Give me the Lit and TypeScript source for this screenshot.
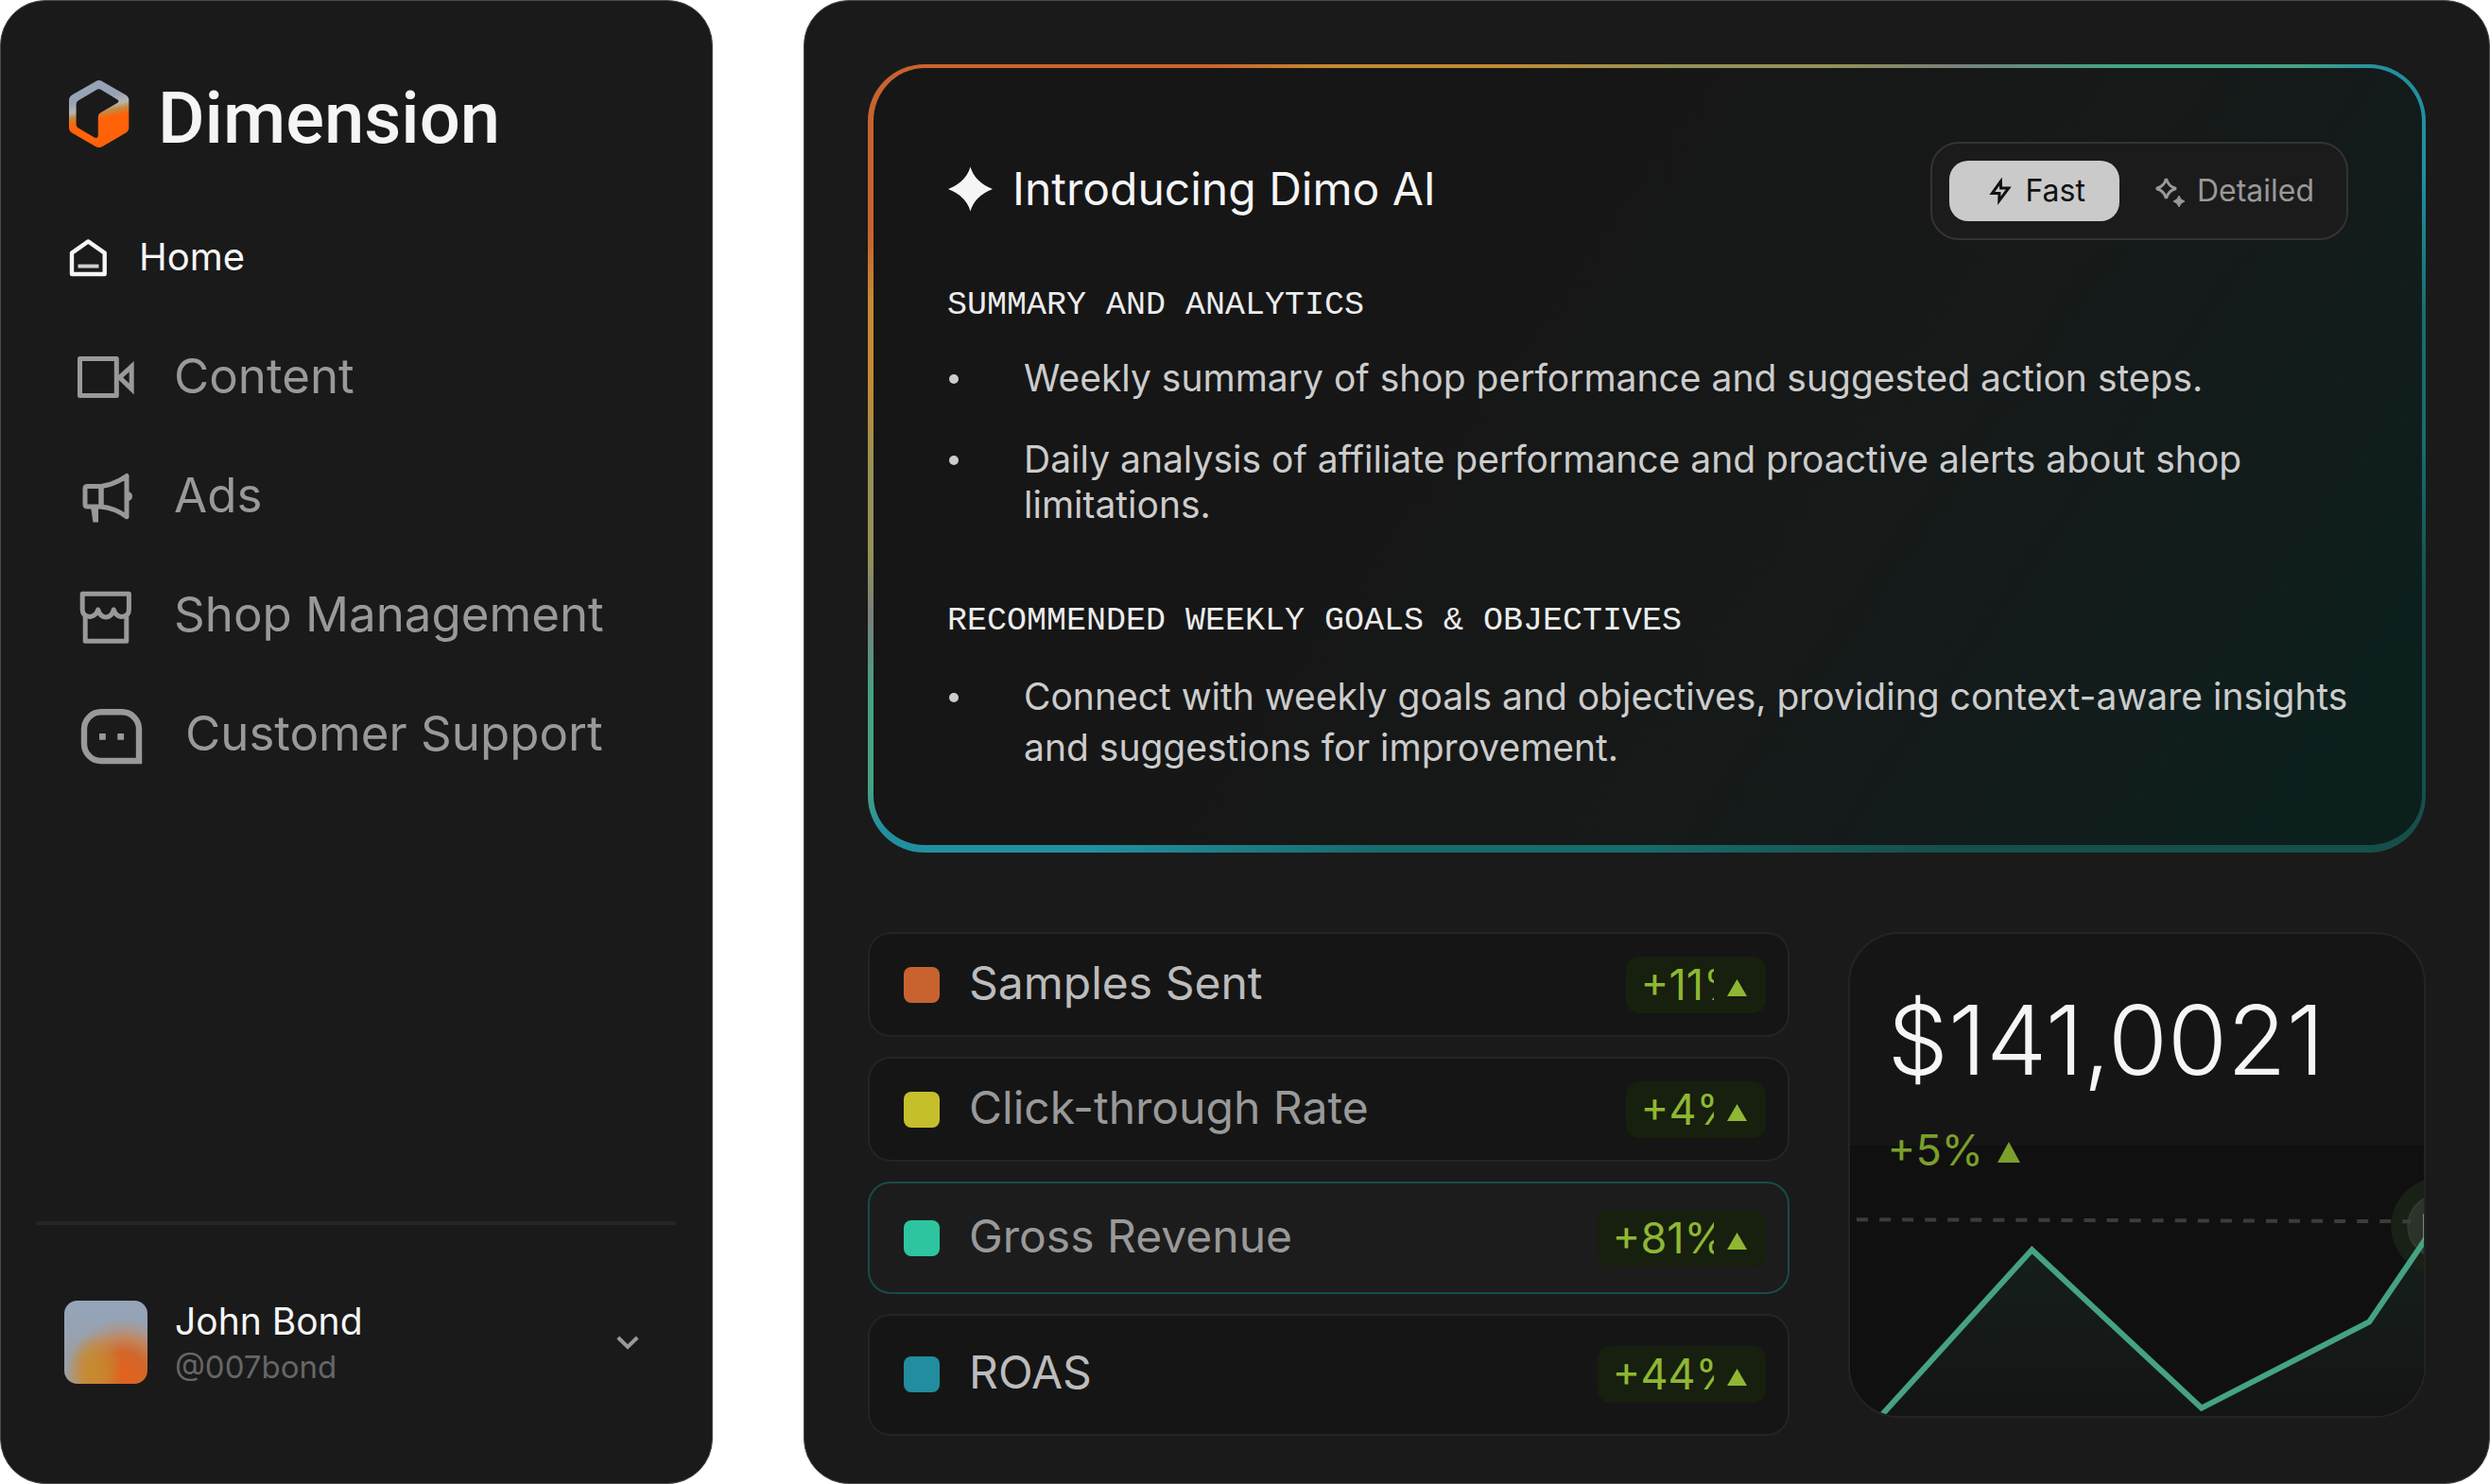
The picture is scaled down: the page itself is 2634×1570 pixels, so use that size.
import { LitElement, html, svg, css } from "lit";
import { customElement, property, state } from "lit/decorators.js";
import { classMap } from "lit/directives/class-map.js";

interface NavEntry {
  label: string;
  icon: string;
}

interface Stat {
  label: string;
  value: string;
  tone: string;
  size: string;
  bright: boolean;
  wide: boolean;
  selected?: boolean;
}

const NAV: NavEntry[] = [
  { label: "Home", icon: "home" },
  { label: "Content", icon: "camera" },
  { label: "Ads", icon: "ads" },
  { label: "Shop Management", icon: "shop" },
  { label: "Customer Support", icon: "support" },
];

const STATS: Stat[] = [
  { label: "Samples Sent", value: "+11%", tone: "orange", size: "small", bright: true, wide: false },
  { label: "Click-through Rate", value: "+4%", tone: "yellow", size: "small", bright: false, wide: false },
  { label: "Gross Revenue", value: "+81%", tone: "green", size: "medium", bright: false, wide: true, selected: true },
  { label: "ROAS", value: "+44%", tone: "blue", size: "large", bright: true, wide: true },
];

const ICONS: Record<string, unknown> = {
  home: html`<svg width="42" height="48" viewBox="0 0 42 48" fill="none" stroke="currentColor" stroke-width="4.4" aria-hidden="true">
    <path d="M20.3 7.4 37.7 19.6V42H3V19.6Z" stroke-linejoin="round" />
    <path d="M9.5 33.6H31.5" stroke="#cfcfcf" stroke-width="4" />
  </svg>`,
  camera: html`<svg width="72" height="62" viewBox="0 1 72 62" fill="none" stroke="currentColor" stroke-width="5" aria-hidden="true">
    <rect x="4.5" y="13.5" width="38.8" height="39" stroke-linejoin="round" />
    <path d="M46.5 33.3 59.2 21.6V45.6Z" />
  </svg>`,
  ads: html`<svg width="72" height="62" viewBox="0 1 72 62" fill="none" stroke="currentColor" stroke-width="5" aria-hidden="true">
    <path d="M27 22.5H12.5Q10 22.5 10 25V41.5Q10 44 12.5 44H27Z" />
    <path d="M27 22.5Q42 20.5 54 11.5V54.8Q42 45.5 27 44Z" stroke-linejoin="round" />
    <path d="M56 28.2A5 5 0 0 1 56 38Z" fill="currentColor" stroke="none" />
    <path d="M16.2 45H24V60.4H18.4Z" fill="currentColor" stroke="none" />
  </svg>`,
  shop: html`<svg width="72" height="62" viewBox="0 1 72 62" fill="none" stroke="currentColor" stroke-width="5" stroke-linejoin="round" aria-hidden="true">
    <path d="M7.2 10.2H56.4V27Q56.4 34 48.6 34.4Q42.4 34 40.3 27Q38 34.8 32 35Q26 34.8 23.7 27Q21.4 34 15.2 34.4Q7.2 34 7.2 27Z" />
    <path d="M10.2 32.5V60.2H53.8V32.5" />
  </svg>`,
  support: html`<svg class="tall" width="72" height="62" viewBox="0 1 72 62" fill="none" stroke="currentColor" stroke-width="6.4" aria-hidden="true">
    <path d="M67 61H27A18 18 0 0 1 9 43V27.5A18 18 0 0 1 27 9.3H49A18 18 0 0 1 67 27.5Z" />
    <path d="M25 32H31.8V38.8H25ZM44.3 32H51.1V38.8H44.3Z" fill="currentColor" stroke="none" />
  </svg>`,
};

@customElement("side-bar")
class SideBar extends LitElement {
  @state() private current = "Home";

  static styles = css`
    :host {
      display: flex;
      flex-direction: column;
      box-sizing: border-box;
      border: 1px solid #4a4a4a;
      border-radius: 48px;
      background: #1a1a1a;
      font-family: Inter, "Liberation Sans", sans-serif;
      color: #f5f5f5;
    }
    svg {
      display: block;
      flex: none;
      overflow: visible;
    }
    .brand {
      display: flex;
      align-items: flex-start;
      gap: 30px;
      padding: 84px 72px 0;
      color: #f5f5f5;
      text-decoration: none;
    }
    .wordmark {
      font: 500 76px/80px Roboto, "Liberation Sans", sans-serif;
    }
    .nav {
      display: flex;
      flex-direction: column;
      gap: 64px;
      padding: 83px 0 0 79px;
    }
    .link {
      display: flex;
      align-items: center;
      gap: 32px;
      font-size: 51px;
      line-height: 62px;
      font-weight: 400;
      color: #999999;
      text-decoration: none;
      white-space: nowrap;
    }
    .link.home {
      margin: 0 0 7px -7px;
      font-size: 40px;
      line-height: 48px;
      color: #f5f5f5;
    }
    .link.support {
      gap: 44px;
    }
    .footer {
      margin: auto 38px 0 37px;
      border-top: 4px solid #232623;
      padding: 78px 0 103px;
    }
    .profile {
      display: flex;
      align-items: center;
      gap: 29px;
      width: 100%;
      border: 0;
      padding: 0 39px 0 30px;
      background: none;
      font: inherit;
      color: inherit;
      text-align: left;
    }
    .avatar {
      flex: none;
      width: 88px;
      height: 88px;
      border-radius: 14px;
      background:
        radial-gradient(ellipse 34% 46% at 36% 84%, #c68b2d 0%, #c68b2dbb 45%, #c68b2d00 100%),
        radial-gradient(ellipse 68% 66% at 72% 88%, #e5611b 0%, #d1672b 40%, #c08760 66%, #ae9484bb 82%, #9c9c9f00 100%),
        linear-gradient(#95a4b8 15%, #9c9c9f);
    }
    .who {
      display: flex;
      flex: 1;
      flex-direction: column;
      gap: 4px;
    }
    .name {
      font-size: 39px;
      line-height: 48px;
    }
    .handle {
      font-size: 33px;
      line-height: 40px;
      color: #666666;
    }
  `;

  render() {
    return html`
      <a class="brand" href="#">
        <svg width="64" height="72" viewBox="0 0 64 72" aria-hidden="true">
          <defs>
            <linearGradient id="cube" gradientUnits="userSpaceOnUse" x1="0" y1="0" x2="14.9" y2="69.6">
              <stop offset="0.34" stop-color="#95a3b5" />
              <stop offset="0.48" stop-color="#b9b6b2" />
              <stop offset="0.56" stop-color="#bf8d45" />
              <stop offset="0.66" stop-color="#ff6209" />
            </linearGradient>
          </defs>
          <path
            fill="url(#cube)"
            fill-rule="evenodd"
            d="M28 1.2Q31.7-1 35.4 1.2L59.8 15.2Q63.3 17.3 63.3 21V50Q63.3 53.8 59.8 55.8L35.4 70Q31.7 72 28 70L3.5 55.8Q0 53.8 0 50V21Q0 17.3 3.5 15.2ZM30 9.6 10 21.2Q7.6 22.6 7.6 25.4V46.6Q7.6 49.2 10 50.6L27 60.6Q30.5 62 30.8 58V38.6Q30.8 35.6 33.3 34.2L51.4 23.7Q53.6 22 51.4 20.6L33.2 9.6Q31.6 8.8 30 9.6Z"
          />
        </svg>
        <span class="wordmark">Dimension</span>
      </a>
      <nav class="nav" aria-label="Main">
        ${NAV.map(
          (entry) => html`<a
            class="link ${entry.icon}"
            href="#"
            aria-current=${this.current === entry.label ? "page" : "false"}
            @click=${() => (this.current = entry.label)}
            >${ICONS[entry.icon]}<span>${entry.label}</span></a
          >`
        )}
      </nav>
      <div class="footer">
        <button class="profile" type="button" aria-label="John Bond, account menu">
          <span class="avatar"></span>
          <span class="who">
            <span class="name">John Bond</span>
            <span class="handle">@007bond</span>
          </span>
          <svg width="24" height="16" viewBox="0 0 24 16" fill="none" stroke="#999999" stroke-width="4" aria-hidden="true">
            <path d="M1.8 3 12 13 22.2 3" />
          </svg>
        </button>
      </div>
    `;
  }
}

@customElement("intro-card")
class IntroCard extends LitElement {
  @state() private mode = "Fast";

  static styles = css`
    :host {
      display: block;
      box-sizing: border-box;
      border-style: solid;
      border-color: transparent;
      border-width: 4px 4px 8px 6px;
      border-radius: 60px;
      padding: 78px 60px 76px 78px;
      background:
        linear-gradient(125deg, #161616 35%, #161918 58%, #141a1a 72%, #111d1c 82%, #0b1f1d 94%) padding-box,
        linear-gradient(
            to bottom right,
            #c8632f 11%,
            #c58a32 15%,
            #c58a32 20%,
            #949255 26%,
            #949255 31%,
            #78807a 35%,
            #45a284 40%,
            #45a284 46%,
            #218fa0 49%,
            #218fa0 57%,
            #176c6d 66%,
            #176c6d 74%,
            #164f4a 84%
          )
          border-box;
      font-family: Inter, "Liberation Sans", sans-serif;
      color: #cccccc;
    }
    svg {
      display: block;
      flex: none;
    }
    .head {
      display: flex;
      align-items: flex-start;
      justify-content: space-between;
      margin-right: 18px;
    }
    .title {
      display: flex;
      align-items: center;
      gap: 21px;
      margin: 0;
      padding-top: 20px;
      font-size: 48px;
      line-height: 60px;
      font-weight: 400;
      color: #f5f5f5;
    }
    .toggle {
      display: flex;
      box-sizing: border-box;
      border: 2px solid #333333;
      border-radius: 30px;
      padding: 18px;
      background: #1b1b1b;
    }
    .mode {
      display: flex;
      align-items: center;
      justify-content: center;
      gap: 12px;
      box-sizing: border-box;
      height: 64px;
      border: 0;
      border-radius: 20px;
      padding: 0 16px 0 36px;
      background: none;
      font: 400 32px/40px Inter, "Liberation Sans", sans-serif;
      color: #999999;
    }
    .mode.on {
      padding: 0 36px 0 40px;
      background: #cacaca;
      color: #111111;
    }
    .section {
      margin: 0;
      padding-top: 79px;
      font: 400 35px/40px "Liberation Mono", monospace;
      color: #ececec;
    }
    .section.first {
      padding-top: 49px;
    }
    .points {
      display: flex;
      flex-direction: column;
      gap: 38px;
      margin: 0;
      padding: 33px 0 0;
      list-style: none;
      font-size: 39px;
      line-height: 48px;
    }
    .points.loose {
      line-height: 54px;
    }
    .point {
      display: flex;
      gap: 69px;
    }
    .point::before {
      content: "";
      flex: none;
      width: 10px;
      height: 10px;
      margin: calc(0.5lh - 4px) 0 0 2px;
      border-radius: 50%;
      background: #cccccc;
    }
  `;

  private modeButton(name: string, icon: unknown) {
    const on = this.mode === name;
    return html`<button
      type="button"
      class=${classMap({ mode: true, on })}
      aria-pressed=${on}
      @click=${() => (this.mode = name)}
    >
      ${icon}<span>${name}</span>
    </button>`;
  }

  render() {
    return html`
      <div class="head">
        <h1 class="title">
          <svg width="48" height="48" viewBox="0 0 48 48" fill="currentColor" aria-hidden="true">
            <path d="M24.5 0.5Q29 16.5 48 24Q29 31.5 24.5 47.5Q20 31.5 1 24Q20 16.5 24.5 0.5Z" />
          </svg>
          <span>Introducing Dimo AI</span>
        </h1>
        <div class="toggle" role="group" aria-label="Answer mode">
          ${this.modeButton(
            "Fast",
            html`<svg width="28" height="32" viewBox="0 0 28 32" fill="none" stroke="currentColor" stroke-width="3" aria-hidden="true">
              <path d="M14.4 6 5.4 18.4H13L12.8 26.4 22.8 13H14.6Z" stroke-linejoin="miter" />
            </svg>`
          )}
          ${this.modeButton(
            "Detailed",
            html`<svg width="34" height="36" viewBox="0 0 34 36" fill="none" stroke="currentColor" stroke-width="3" aria-hidden="true">
              <path d="M13.5 5Q15.6 13.4 24 15.5Q15.6 17.6 13.5 26Q11.4 17.6 3 15.5Q11.4 13.4 13.5 5Z" />
              <path d="M27 23Q28.2 27.6 33 29Q28.2 30.4 27 35Q25.8 30.4 21 29Q25.8 27.6 27 23Z" fill="currentColor" stroke-width="1" />
            </svg>`
          )}
        </div>
      </div>
      <h2 class="section first">SUMMARY AND ANALYTICS</h2>
      <ul class="points">
        <li class="point"><span>Weekly summary of shop performance and suggested action steps.</span></li>
        <li class="point"><span>Daily analysis of affiliate performance and proactive alerts about shop limitations.</span></li>
      </ul>
      <h2 class="section">RECOMMENDED WEEKLY GOALS &amp; OBJECTIVES</h2>
      <ul class="points loose">
        <li class="point"><span>Connect with weekly goals and objectives, providing context-aware insights and suggestions for improvement.</span></li>
      </ul>
    `;
  }
}

@customElement("stat-row")
class StatRow extends LitElement {
  @property({ attribute: false }) stat!: Stat;

  static styles = css`
    :host {
      display: block;
      font-family: Inter, "Liberation Sans", sans-serif;
    }
    .row {
      display: flex;
      align-items: center;
      box-sizing: border-box;
      border: 2px solid #242424;
      border-radius: 24px;
      padding: 24px 23px 23px 36px;
      background: #151515;
    }
    .row.medium {
      padding-block: 28px 27px;
    }
    .row.large {
      padding-block: 32px 33px;
    }
    .row.selected {
      border-color: #174c48;
      background: #1c1c1c;
    }
    .swatch {
      flex: none;
      width: 38px;
      height: 38px;
      border-radius: 8px;
    }
    .orange {
      background: #c8632f;
    }
    .yellow {
      background: #c5bf2c;
    }
    .green {
      background: #2dc59f;
    }
    .blue {
      background: #218d9e;
    }
    .label {
      flex: 1;
      padding: 0 0 4px 31px;
      font-size: 48px;
      line-height: 56px;
      color: #999999;
    }
    .label.bright {
      color: #bcbcbc;
    }
    .badge {
      display: flex;
      align-items: center;
      gap: 14px;
      box-sizing: border-box;
      width: 148px;
      border-radius: 14px;
      padding: 0 20px 0 16px;
      background: #171f0e;
      font-size: 45px;
      line-height: 60px;
      font-weight: 400;
      color: #8fb733;
    }
    .badge.wide {
      width: 178px;
    }
    .value {
      flex: 1;
      min-width: 0;
      overflow: hidden;
    }
    .up {
      display: block;
      flex: none;
      padding-top: 5px;
    }
  `;

  render() {
    const s = this.stat;
    return html`<div class=${classMap({ row: true, [s.size]: true, selected: !!s.selected })}>
      <span class="swatch ${s.tone}"></span>
      <span class=${classMap({ label: true, bright: s.bright })}>${s.label}</span>
      <span class=${classMap({ badge: true, wide: s.wide })}>
        <span class="value">${s.value}</span>
        <svg class="up" width="21" height="18" viewBox="0 0 21 18" aria-hidden="true"><path d="M10.5 0 21 18H0Z" fill="currentColor" /></svg>
      </span>
    </div>`;
  }
}

@customElement("revenue-card")
class RevenueCard extends LitElement {
  static styles = css`
    :host {
      display: block;
      position: relative;
      box-sizing: border-box;
      overflow: hidden;
      border: 2px solid #242424;
      border-radius: 54px;
      padding: 50px 0 0 40px;
      background: #151515;
      font-family: Inter, "Liberation Sans", sans-serif;
    }
    .amount {
      position: relative;
      font-size: 102px;
      line-height: 124px;
      font-weight: 300;
      color: #f5f5f5;
    }
    .change {
      position: relative;
      display: flex;
      align-items: center;
      gap: 15px;
      padding-top: 28px;
      font-size: 45px;
      line-height: 54px;
      font-weight: 400;
      color: #7a9f2b;
    }
    .up {
      display: block;
      padding-top: 4px;
    }
    /* The chart sits behind the figures and runs into the card's lower edge. */
    .chart {
      position: absolute;
      inset: auto 0 0 0;
      display: block;
      width: 100%;
    }
  `;

  render() {
    const line = "22,297 192,110 371,277 548,186 612,92";
    return html`
      <svg class="chart" viewBox="0 0 606 286" role="img" aria-label="Revenue trend">
        <defs>
          <linearGradient id="area" x1="0" y1="0" x2="0" y2="1">
            <stop offset="0" stop-color="#15201b" />
            <stop offset="0.5" stop-color="#151a19" />
            <stop offset="1" stop-color="#131413" />
          </linearGradient>
        </defs>
        <rect width="606" height="286" fill="#101010" />
        ${svg`<polygon points="${line} 612,300 22,300" fill="url(#area)" />`}
        <circle cx="622" cy="85" r="51" fill="#192015" />
        <circle cx="622" cy="85" r="33" fill="#2a3429" stroke="#343834" stroke-width="2" />
        <path d="M7 78 592 80" stroke="#3c3c3c" stroke-width="4" stroke-dasharray="12 12" fill="none" />
        ${svg`<polyline points=${line} fill="none" stroke="#45a284" stroke-width="6" />`}
        <path d="M605.5 72V100" stroke="#b0b0b0" stroke-width="1" />
      </svg>
      <div class="amount">$141,0021</div>
      <div class="change">
        <span>+5%</span>
        <svg class="up" width="24" height="22" viewBox="0 0 24 22" aria-hidden="true"><path d="M12 0 24 22H0Z" fill="currentColor" /></svg>
      </div>
    `;
  }
}

@customElement("app-root")
class AppRoot extends LitElement {
  static styles = css`
    :host {
      display: block;
      background: #ffffff;
    }
    .page {
      display: grid;
      grid-template-columns: 754fr 1784fr;
      gap: 96px;
      min-height: 100vh;
    }
    .main {
      display: flex;
      flex-direction: column;
      gap: 84px;
      box-sizing: border-box;
      min-width: 0;
      border: 1px solid #4a4a4a;
      border-radius: 48px;
      padding: 67px;
      padding-bottom: 0;
      background: #1a1a1a;
    }
    .lower {
      display: grid;
      grid-template-columns: 974fr 611fr;
      gap: 62px;
      align-items: start;
    }
    .stats {
      display: flex;
      flex-direction: column;
      gap: 21px;
    }
    .revenue {
      aspect-ratio: 611 / 514;
    }
  `;

  render() {
    return html`<div class="page">
      <side-bar></side-bar>
      <main class="main">
        <intro-card></intro-card>
        <div class="lower">
          <div class="stats">${STATS.map((s) => html`<stat-row .stat=${s}></stat-row>`)}</div>
          <revenue-card class="revenue"></revenue-card>
        </div>
      </main>
    </div>`;
  }
}
